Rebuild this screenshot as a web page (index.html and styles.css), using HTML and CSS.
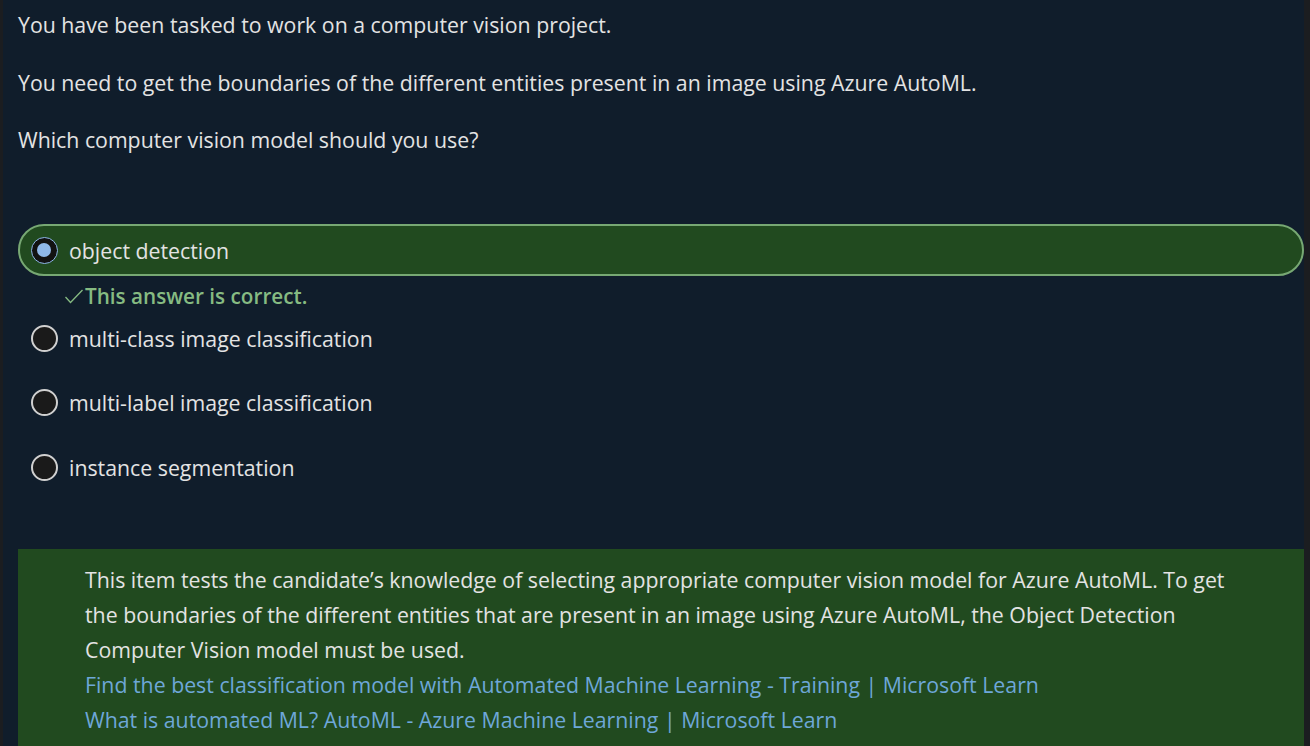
FILE: index.html
```html
<!DOCTYPE html>
<html>
<head>
<meta charset="utf-8">
<link rel="stylesheet" href="styles.css">
</head>
<body>
<div class="page">
  <div class="question">
    <p>You have been tasked to work on a computer vision project.</p>
    <p>You need to get the boundaries of the different entities present in an image using Azure AutoML.</p>
    <p>Which computer vision model should you use?</p>
  </div>
  <div class="options">
    <div class="option selected">
      <span class="radio checked"></span>
      <span class="label">object detection</span>
    </div>
    <div class="feedback"><svg class="check" width="20" height="16" viewBox="0 0 20 16"><polyline points="1.5,9 6.5,14.5 18.5,2" fill="none" stroke="#86bb82" stroke-width="1.3"/></svg>This answer is correct.</div>
    <div class="option">
      <span class="radio"></span>
      <span class="label">multi-class image classification</span>
    </div>
    <div class="option">
      <span class="radio"></span>
      <span class="label">multi-label image classification</span>
    </div>
    <div class="option">
      <span class="radio"></span>
      <span class="label">instance segmentation</span>
    </div>
  </div>
  <div class="explanation">
    <p>This item tests the candidate’s knowledge of selecting appropriate computer vision model for Azure AutoML. To get the boundaries of the different entities that are present in an image using Azure AutoML, the Object Detection Computer Vision model must be used.</p>
    <a href="#">Find the best classification model with Automated Machine Learning - Training | Microsoft Learn</a>
    <a href="#">What is automated ML? AutoML - Azure Machine Learning | Microsoft Learn</a>
  </div>
</div>
</body>
</html>
```

FILE: styles.css
```css
html, body {
  margin: 0;
  padding: 0;
  background: #101d2b;
  height: 100%;
  overflow: hidden;
}
.page {
  box-sizing: border-box;
  height: 746px;
  border-left: 3px solid #1b1d20;
  border-right: 6px solid #1b1d20;
  padding: 0 0 0 15px;
  font-family: "Open Sans", "Noto Sans", sans-serif;
  font-size: 21.3px;
  color: #e3e3e3;
}
.question {
  padding-top: 11px;
}
.question p {
  margin: 0 0 29.5px 0;
  line-height: 28px;
}
.options {
  margin-top: 70px;
  display: flex;
  flex-direction: column;
}
.option {
  display: flex;
  align-items: center;
  height: 52px;
  padding-left: 11px;
  box-sizing: border-box;
  border: 2px solid transparent;
  border-radius: 27px;
  margin-bottom: 12.5px;
}
.option:last-child {
  margin-bottom: 0;
}
.option.selected {
  background: #214a1f;
  border-color: #77a873;
  margin-bottom: 0;
}
.radio {
  width: 27px;
  height: 27px;
  box-sizing: border-box;
  border-radius: 50%;
  border: 2px solid #d0d0d0;
  background: #1a1a1a;
  margin-right: 11px;
  flex: none;
  position: relative;
}
.radio.checked {
  border: 1.5px solid #8fb8e8;
  background: #121212;
}
.radio.checked::after {
  content: "";
  position: absolute;
  left: 5px;
  top: 5px;
  width: 14px;
  height: 14px;
  border-radius: 50%;
  background: #8fb8e8;
}
.feedback {
  display: flex;
  align-items: center;
  color: #86bb82;
  font-weight: 600;
  padding-left: 46px;
  padding-top: 3px;
  height: 33px;
  font-size: 20.7px;
}
.check {
  margin-right: 1px;
  flex: none;
}
.explanation {
  margin-top: 56px;
  background: #214a1f;
  padding: 12.5px 58px 20px 67px;
  line-height: 35px;
}
.explanation p {
  margin: 0;
}
.explanation a {
  display: block;
  color: #6ea7d8;
  text-decoration: none;
}
```
